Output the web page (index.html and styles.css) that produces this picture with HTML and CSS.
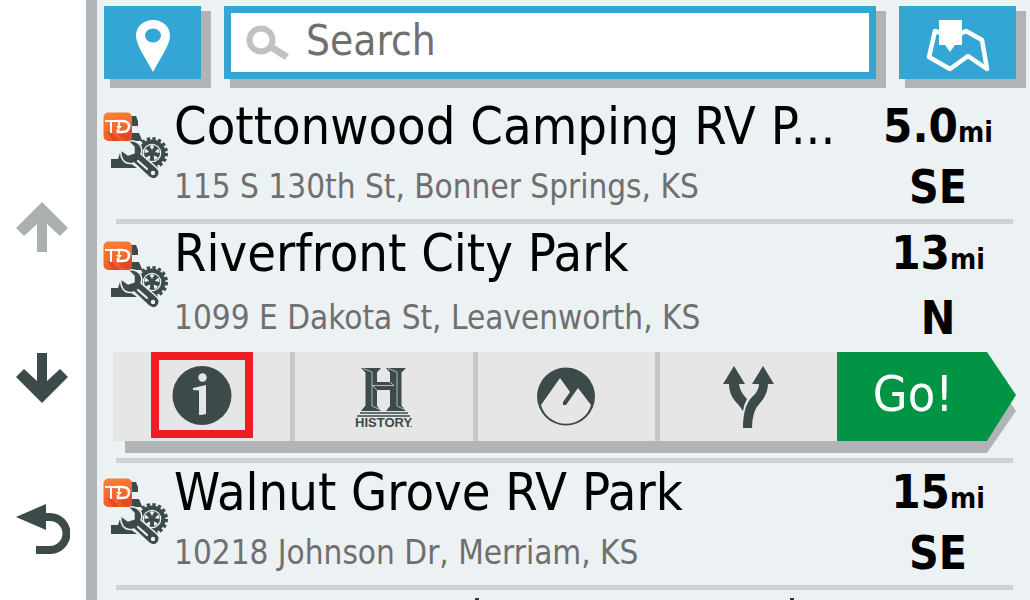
FILE: index.html
```html
<!DOCTYPE html>
<html lang="en">
<head>
<meta charset="utf-8">
<title>Search results</title>
<link rel="stylesheet" href="styles.css">
</head>
<body>
<svg class="defs" aria-hidden="true">
  <defs>
    <linearGradient id="orange" x1="0" y1="0" x2="0.3" y2="1">
      <stop offset="0" stop-color="#fa8338"/><stop offset="1" stop-color="#f1592a"/>
    </linearGradient>
    <symbol id="service" viewBox="0 0 66 68">
      <g fill="#3c4a4a">
        <path d="M26 4h7l2 5v5h-9zM26 21h10l3 7v1H26zM8 47h7l2-6 3 5 14 10H8z"/>
        <circle cx="49" cy="41" r="13.500"/>
        <circle cx="49" cy="41" r="14.500" fill="none" stroke="#3c4a4a" stroke-width="3" stroke-dasharray="3.300 2.394"/>
      </g>
      <circle cx="49" cy="41" r="9.300" fill="#ecf1f4"/>
      <circle cx="49" cy="41" r="8" fill="#3c4a4a"/>
      <g fill="#ecf1f4">
        <path d="M49 38l-2.300-4q2.300-1.500 4.600 0z"/>
        <path d="M49 38l-2.300-4q2.300-1.500 4.600 0z" transform="rotate(72 49 41)"/>
        <path d="M49 38l-2.300-4q2.300-1.500 4.600 0z" transform="rotate(144 49 41)"/>
        <path d="M49 38l-2.300-4q2.300-1.500 4.600 0z" transform="rotate(216 49 41)"/>
        <path d="M49 38l-2.300-4q2.300-1.500 4.600 0z" transform="rotate(288 49 41)"/>
      </g>
      <path d="M25 29q8-1 12 4 3 4 1 9l16 14q4 4 1 8.500t-8.500 1L31 51q-7 2-11-3-3-4-2-10l7 5 6-2 0-6z" fill="#3c4a4a" stroke="#ecf1f4" stroke-width="1.500"/>
      <path d="M35 49l9 8" stroke="#ecf1f4" stroke-width="2.200" stroke-linecap="round"/>
      <circle cx="50" cy="61" r="2.200" fill="#ecf1f4"/>
      <rect x="0.500" y="0.500" width="28.500" height="28.500" rx="5" fill="url(#orange)"/>
      <path d="M4 20h4l9 9H10zM13 20l9 9h3q4 0 4-4v-9l-3-4-4 8z" fill="#e24a25"/>
      <g fill="none" stroke="#fff">
        <path d="M2 9h12M8 9v12" stroke-width="2"/>
        <path d="M14 9h5q7 0 7 5.500T19 20h-4v-3" stroke-width="2.600"/>
        <path d="M16 9v6" stroke-width="2"/>
      </g>
      <path d="M13 14h6L16 17.500z" fill="#fff"/>
    </symbol>
  </defs>
</svg>
<div class="screen">
  <nav class="rail" aria-label="Navigation">
    <button class="rail-button" aria-label="Scroll up" disabled>
      <svg width="52" height="50" viewBox="0 0 52 50"><path d="M26 0L52 26l-8 8-13-12v28H21V22L8 34 0 26z" fill="#abb1b1"/></svg>
    </button>
    <button class="rail-button" aria-label="Scroll down">
      <svg width="52" height="50" viewBox="0 0 52 50"><path d="M26 50L52 24l-8-8-13 12V0H21v28L8 16 0 24z" fill="#3c4a4a"/></svg>
    </button>
    <button class="rail-button" aria-label="Back">
      <svg width="54" height="50" viewBox="0 0 54 50"><path d="M0 13L30 0v9h4a20 20 0 0 1 0 41H20v-8h14a12.500 12.500 0 0 0 0-25h-4v9z" fill="#3c4a4a"/></svg>
    </button>
  </nav>
  <main class="main">
    <header class="header">
      <button class="tile near" aria-label="Search near">
        <svg width="34" height="52" viewBox="0 0 34 52"><path d="M17 0C7 0 0 7 0 15.500 0 25 9 37 17 52 25 37 34 25 34 15.500 34 7 27 0 17 0zm0 8.500a8 7 0 1 1 0 14 8 7 0 1 1 0-14z" fill="#fff"/></svg>
      </button>
      <label class="search">
        <svg width="44" height="36" viewBox="0 0 44 36"><circle cx="15" cy="15" r="11.500" fill="none" stroke="#c1c1c1" stroke-width="6"/><path d="M25 22l16 10" stroke="#c1c1c1" stroke-width="7"/></svg>
        <input class="search-input" type="text" placeholder="Search" aria-label="Search">
      </label>
      <button class="tile map" aria-label="Show on map">
        <svg width="64" height="54" viewBox="0 0 64 54"><path d="M15 14L9 12 3 38l21 12 18-13 19 13-5-29-16-9-6 3" fill="none" stroke="#fff" stroke-width="4.500" stroke-linejoin="round"/><path d="M13 1h23v25h-7l-5 7-5-7h-6z" fill="#fff"/></svg>
      </button>
    </header>
    <ul class="results">
      <li class="result">
        <svg class="badge" width="66" height="68"><use href="#service"/></svg>
        <div class="place"><h2 class="name">Cottonwood Camping RV P...</h2><p class="address">115 S 130th St, Bonner Springs, KS</p></div>
        <div class="where"><p class="distance">5.0<span class="unit">mi</span></p><p class="heading">SE</p></div>
      </li>
      <li class="result selected">
        <svg class="badge" width="66" height="68"><use href="#service"/></svg>
        <div class="place"><h2 class="name">Riverfront City Park</h2><p class="address">1099 E Dakota St, Leavenworth, KS</p></div>
        <div class="where"><p class="distance">13<span class="unit">mi</span></p><p class="heading">N</p></div>
        <div class="actions">
          <button class="action" aria-label="Information">
            <span class="highlight"><svg width="60" height="60" viewBox="0 0 60 60"><circle cx="30" cy="30.500" r="29.500" fill="#3c4a4a"/><circle cx="30.500" cy="12.500" r="4.200" fill="#e6e6e6"/><path d="M21 23l13-3v29q-3 1-7 1V26q0-1-6-1z" fill="#e6e6e6"/></svg></span>
          </button>
          <button class="action" aria-label="History">
            <svg width="62" height="70" viewBox="-2 -6 62 70"><path d="M6 0h20l-4 4.500V14h13V4.500L31 0h20l-4.500 4.500v33L51 43H31l4-5V22H22v16l4 5H6l4.500-5.500v-33z" fill="#3c4a4a"/><path d="M8 0.500l9 3.500v34l8.500 4M33 0.500L42 4v34l8.500 4M17.500 17.500H39l-5-4M17.500 17.500L22 22" fill="none" stroke="#e6e6e6" stroke-width="0.700"/><path d="M5 45h48M2 48h53" stroke="#3c4a4a" stroke-width="1.700"/><text x="0" y="59" class="history-word">HISTORY</text><circle cx="56" cy="58.500" r="0.700" fill="#3c4a4a"/></svg>
          </button>
          <button class="action" aria-label="Elevation">
            <svg width="60" height="60" viewBox="0 0 60 60"><circle cx="30" cy="29.500" r="29" fill="#3c4a4a"/><path d="M5 38L24 11l10 14-7 10v3h3l12-17 13 17A26 26 0 0 1 5 38z" fill="#e6e6e6"/></svg>
          </button>
          <button class="action" aria-label="Alternate routes">
            <svg width="52" height="62" viewBox="-1 0 52 62"><path d="M11 0l11 18h-6q1 8 8 15-3 5-4 12-3-5-8-10Q6 28 6 18H0zM40 0l11 18h-6q0 10-8 19-8 8-8 25h-9q0-22 9-31 7-6 7-13h-7z" fill="#3c4a4a"/></svg>
          </button>
          <button class="go">Go!</button>
        </div>
      </li>
      <li class="result">
        <svg class="badge" width="66" height="68"><use href="#service"/></svg>
        <div class="place"><h2 class="name">Walnut Grove RV Park</h2><p class="address">10218 Johnson Dr, Merriam, KS</p></div>
        <div class="where"><p class="distance">15<span class="unit">mi</span></p><p class="heading">SE</p></div>
      </li>
      <li class="next-result" aria-hidden="true"><i class="tip"></i><i class="tip"></i></li>
    </ul>
  </main>
</div>
</body>
</html>
```
FILE: styles.css
```css
* { box-sizing: border-box; }
body {
  margin: 0;
  background: #ecf1f4;
  font-family: "DejaVu Sans Condensed", "DejaVu Sans", sans-serif;
  color: #000;
}
button { border: 0; padding: 0; font: inherit; background: none; }
svg { display: block; flex: none; }
h2, p, ul { margin: 0; padding: 0; font-weight: normal; }
.defs { position: absolute; width: 0; height: 0; }
.screen { display: flex; height: 100vh; overflow: hidden; }

.rail {
  flex: none;
  width: 97px;
  border-right: 11px solid #b0b4b7;
  background: #fff;
  display: flex;
  flex-direction: column;
  padding: 202px 0 0 16px;
  gap: 101px;
}
.rail-button { display: flex; }

.main { flex: 1; min-width: 0; }
.header { display: flex; height: 97px; padding: 6px 14px 18px 7px; gap: 23px; }
.tile {
  display: flex;
  justify-content: center;
  align-items: center;
  background: #34a6d5;
  box-shadow: 8px 7px 0 2px #b0b4b7;
}
.near { width: 97px; padding-top: 6px; }
.map { width: 117px; padding-top: 6px; }
.search {
  flex: 1;
  display: flex;
  align-items: center;
  gap: 16px;
  padding-left: 15px;
  border: 7px solid #34a6d5;
  background: #fff;
  box-shadow: 8px 7px 0 2px #b0b4b7;
}
.search-input {
  flex: 1;
  min-width: 0;
  border: 0;
  padding: 0 0 4px;
  outline: 0;
  background: none;
  font: inherit;
  font-size: 42px;
  line-height: 48px;
}
.search-input::placeholder { color: #6f6f6f; opacity: 1; }

.results { list-style: none; }
.result {
  display: grid;
  grid-template-columns: 71px 1fr 150px;
  padding: 0 17px 0 6px;
}
.result::after {
  content: "";
  grid-column: 1 / -1;
  height: 5px;
  margin-left: 13px;
  background: #cdd1d4;
}
.badge { margin-top: 15px; }
.place { min-height: 122px; white-space: nowrap; }
.selected .place { min-height: 128px; }
.name { font-size: 52px; line-height: 58px; }
.address { font-size: 33px; line-height: 40px; margin-top: 12px; color: #6f6f6f; }
.selected .badge { margin-top: 17px; }
.selected .address { margin-top: 16px; }
.where { text-align: center; font-weight: bold; }
.distance { font-size: 47px; line-height: 57px; font-weight: bold; }
.unit { font-size: 28px; line-height: 28px; }
.heading { font-size: 46px; line-height: 60px; margin-top: 3px; font-weight: bold; }
.selected .heading { margin-top: 7px; }

.actions {
  grid-column: 1 / -1;
  position: relative;
  display: flex;
  height: 89px;
  margin: 0 -3px 17px 10px;
}
.actions::before {
  content: "";
  position: absolute;
  inset: 16px 0 -12px 12px;
  background: #b0b4b7;
  clip-path: polygon(0 0, calc(100% - 29px) 0, 100% 43px, calc(100% - 29px) 100%, 0 100%);
}
.action {
  position: relative;
  flex: 1;
  display: flex;
  justify-content: center;
  align-items: center;
  background: #e6e6e6;
  border-right: 5px solid #c6c6c6;
}
.action:nth-child(4) { border-right: 0; }
.highlight {
  display: flex;
  align-items: center;
  justify-content: center;
  width: 102px;
  height: 86px;
  margin-bottom: 3px;
  border: 8px solid #ee1c25;
}
.history-word { font: bold 13px "Liberation Sans", sans-serif; fill: #3c4a4a; }
.go {
  position: relative;
  width: 179px;
  padding: 0 27px 5px 0;
  background: #009444;
  color: #fff;
  font-size: 50px;
  clip-path: polygon(0 0, calc(100% - 29px) 0, 100% 43px, calc(100% - 29px) 100%, 0 100%);
}
.next-result { display: flex; gap: 311px; padding: 8px 0 0 378px; }
.tip { width: 4px; height: 2px; background: #333; }
```
